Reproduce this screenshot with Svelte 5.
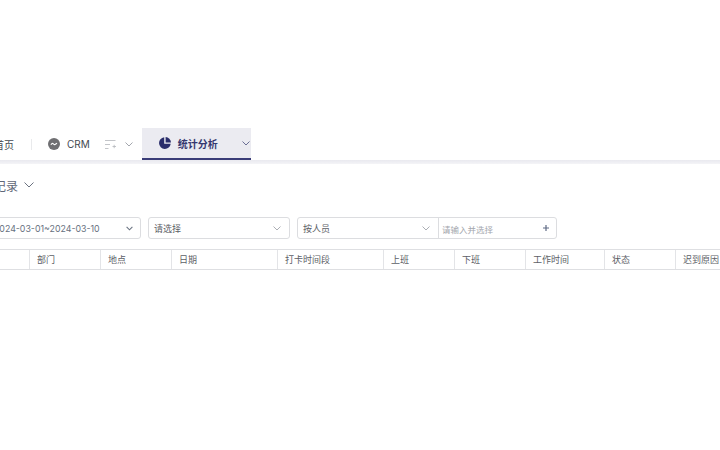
<script>
    const columns = [
        { label: '', width: 71 },
        { label: '部门', width: 71 },
        { label: '地点', width: 71 },
        { label: '日期', width: 106 },
        { label: '打卡时间段', width: 106 },
        { label: '上班', width: 71 },
        { label: '下班', width: 71 },
        { label: '工作时间', width: 79 },
        { label: '状态', width: 71 },
        { label: '迟到原因', width: 71 }
    ];
</script>

<div class="page">
    <nav class="tabs">
        <div class="tab home">首页</div>
        <div class="divider"></div>
        <div class="tab crm">
            <svg class="crm-icon" width="12" height="12" viewBox="0 0 12 12">
                <circle cx="6" cy="6" r="6" fill="#6f6f72" />
                <path d="M3 6.8 C3.6 5.2 4.8 5.2 5.4 6 C6 6.8 7.4 6.9 8.9 5.2" fill="none" stroke="#fff" stroke-width="1.2" />
            </svg>
            <span>CRM</span>
            <svg class="add-icon" width="11" height="9" viewBox="0 0 11 9">
                <path d="M0 .5h10.5M0 4.5h5M0 8.5h3.5M7.5 6.5h3.5M9.2 4.8v3.4" fill="none" stroke="#b4b6bb" stroke-width=".8" />
            </svg>
            <svg class="chev" width="8" height="5" viewBox="0 0 8 5">
                <path d="M.5.5 4 4 7.5.5" fill="none" stroke="#a3a6ad" stroke-width="1" />
            </svg>
        </div>
        <div class="tab active">
            <svg width="12" height="12" viewBox="0 0 12 12">
                <path d="M5.2.3v6.5h6.5A5.85 5.85 0 1 1 5.2.3z" fill="#2a2d6b" />
                <path d="M6.6 0A5.6 5.6 0 0 1 12 5.4H6.6z" fill="#2a2d6b" />
            </svg>
            <span>统计分析</span>
            <svg class="chev end" width="8" height="5" viewBox="0 0 8 5">
                <path d="M.5.5 4 4 7.5.5" fill="none" stroke="#6a6e94" stroke-width="1" />
            </svg>
        </div>
    </nav>
    <div class="band"></div>

    <div class="title">
        <span>考勤记录</span>
        <svg width="10" height="6" viewBox="0 0 10 6">
            <path d="M.5.5 5 5 9.5.5" fill="none" stroke="#6b7280" stroke-width="1" />
        </svg>
    </div>

    <div class="filters">
        <div class="select date">
            <span>2024-03-01~2024-03-10</span>
            <svg width="7" height="5" viewBox="0 0 7 5">
                <path d="M.6.8 3.5 3.8 6.4.8" fill="none" stroke="#6b7482" stroke-width="1.1" />
            </svg>
        </div>
        <div class="select plain">
            <span>请选择</span>
            <svg width="8" height="5" viewBox="0 0 8 5">
                <path d="M.5.5 4 4 7.5.5" fill="none" stroke="#a3a6ad" stroke-width=".9" />
            </svg>
        </div>
        <div class="combo">
            <div class="combo-left">
                <span>按人员</span>
                <svg width="8" height="5" viewBox="0 0 8 5">
                    <path d="M.5.5 4 4 7.5.5" fill="none" stroke="#a3a6ad" stroke-width=".9" />
                </svg>
            </div>
            <div class="combo-right">
                <span>请输入并选择</span>
                <svg width="6" height="6" viewBox="0 0 6 6">
                    <path d="M3 0v6M0 3h6" fill="none" stroke="#5f6b85" stroke-width="1.2" />
                </svg>
            </div>
        </div>
    </div>

    <div class="table-head">
        {#each columns as col}
            <div class="cell" style="width: {col.width}px">{col.label}</div>
        {/each}
    </div>
</div>

<style>
    :global(body) {
        margin: 0;
        background: #fff;
        overflow: hidden;
    }
    .page {
        width: 800px;
        margin-left: -41px;
        padding-top: 128px;
        font-family: Inter, "Noto Sans CJK SC", sans-serif;
        color: #5c6066;
    }
    .tabs {
        display: flex;
        align-items: center;
        height: 32px;
        font-size: 10px;
    }
    .tab {
        display: flex;
        align-items: center;
    }
    .home {
        margin-left: 35px;
        color: #44484f;
    }
    .divider {
        width: 1px;
        height: 11px;
        background: #e9eaec;
        margin-left: 17px;
    }
    .crm {
        margin-left: 16px;
        height: 100%;
        color: #44484f;
    }
    .crm-icon {
        margin-right: 7px;
    }
    .add-icon {
        margin-left: 15px;
    }
    .chev {
        margin-left: 9px;
    }
    .active {
        box-sizing: border-box;
        width: 109px;
        height: 100%;
        margin-left: 9px;
        padding-left: 17px;
        background: #ebebf1;
        border-bottom: 2px solid #3a3d78;
        color: #34376f;
        font-weight: 600;
    }
    .active span {
        margin-left: 7px;
    }
    .chev.end {
        margin-left: auto;
        margin-right: 1px;
    }
    .band {
        height: 4px;
        background: linear-gradient(#e9e9ef, #f4f4f7);
    }
    .title {
        display: flex;
        align-items: center;
        gap: 6px;
        height: 18px;
        margin-top: 12px;
        margin-left: 11px;
        font-size: 12px;
        color: #5f6778;
    }
    .filters {
        display: flex;
        gap: 7px;
        margin-top: 23px;
        margin-left: 11px;
        font-size: 9px;
    }
    .select,
    .combo {
        box-sizing: border-box;
        height: 22px;
        border: 1px solid #dcdde0;
        border-radius: 3px;
        display: flex;
        align-items: center;
    }
    .select {
        justify-content: space-between;
        padding: 0 7px 0 5px;
    }
    .date {
        width: 171px;
        padding-left: 23px;
        font-size: 8.8px;
        color: #66707e;
    }
    .plain {
        width: 142px;
        padding-right: 8px;
    }
    .combo {
        width: 260px;
    }
    .combo-left {
        box-sizing: border-box;
        width: 141px;
        height: 100%;
        padding: 0 8px 0 5px;
        border-right: 1px solid #dcdde0;
        display: flex;
        align-items: center;
        justify-content: space-between;
    }
    .combo-right {
        flex: 1;
        padding: 0 7px 0 3px;
        display: flex;
        align-items: center;
        justify-content: space-between;
        color: #a3a6ad;
        font-size: 8.5px;
    }
    .combo-right span {
        margin-top: 2px;
    }
    .table-head {
        display: flex;
        height: 21px;
        margin-top: 10px;
        box-sizing: border-box;
        border-top: 1px solid #dedfe2;
        border-bottom: 1px solid #dedfe2;
        font-size: 9px;
    }
    .cell {
        box-sizing: border-box;
        flex: none;
        display: flex;
        align-items: center;
        padding-left: 7px;
        border-right: 1px solid #e3e4e7;
    }
</style>
